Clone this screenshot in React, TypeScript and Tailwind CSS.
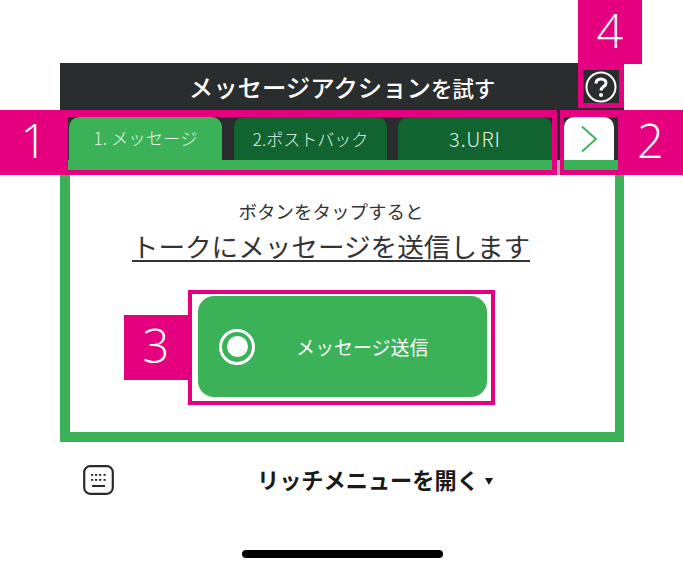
const jp = { fontFamily: '"Noto Sans CJK JP", "Noto Sans", sans-serif' };

function Num({ n, className }: { n: string; className: string }) {
  return (
    <div
      className={`absolute flex items-center justify-center bg-[#e4007f] pb-[4px] text-[47px] font-light leading-none text-white [font-family:'Open_Sans',sans-serif] ${className}`}
    >
      {n}
    </div>
  );
}

function Tab({ label, active, className }: { label: string; active?: boolean; className: string }) {
  return (
    <div
      className={`flex h-[43px] items-center justify-center rounded-t-[10px] font-light text-[#e4f3e8] ${active ? 'bg-[#3bb158]' : 'bg-[#11632f]'} ${className}`}
    >
      {label}
    </div>
  );
}

export default function App() {
  return (
    <div className="relative h-[572px] w-[683px] overflow-hidden bg-white" style={jp}>
      <div className="ml-[60px] w-[564px] pt-[63px]">
        <div className="flex h-[47px] items-center justify-center bg-[#2a2d2d] pt-[2px] font-medium leading-none text-white">
          <span className="text-[24.4px]">メッセージアクション</span>
          <span className="text-[21.4px]">を試す</span>
        </div>
        <div className="flex h-[50px] items-start bg-[#2a2d2d] pl-[9px] pr-[10px] pt-[7px]">
          <Tab label="1. メッセージ" active className="w-[153px] text-[17.4px]" />
          <Tab label="2.ポストバック" className="ml-[12px] w-[153px] text-[17px]" />
          <Tab label="3.URI" className="ml-[11px] w-[154px] text-[20px] tracking-[1px]" />
          <div className="ml-[12px] flex h-[43px] w-[50px] items-center justify-center rounded-t-[10px] bg-white">
            <svg width="20" height="28" viewBox="0 0 20 28" fill="none" stroke="#3bb158" strokeWidth="1.8">
              <path d="M3 1.5 L17 14 L3 26.5" />
            </svg>
          </div>
        </div>
        <div className="flex h-[282px] flex-col border-x-[10px] border-y-[10px] border-[#3bb158] bg-white [border-right-width:9px]">
          <div className="flex flex-col items-center pr-[23px] text-[#333]">
            <p className="mt-[29px] text-[18.5px] font-normal leading-[24px]">ボタンをタップすると</p>
            <p className="mt-[9px] border-b-2 border-[#333] text-[26.6px] font-normal leading-[28px]">トークにメッセージを送信します</p>
          </div>
          <div className="relative ml-[118px] mt-[28px] h-[115px] w-[307px] border-4 border-[#e4007f] bg-white pb-[4px] pl-[6px] pr-[4px] pt-[2px]">
            <Num n="3" className="-left-[68px] top-[21px] h-[65px] w-[64px]" />
            <div className="flex h-[101px] items-center rounded-[16px] bg-[#3bb158] pl-[21px] text-white">
              <div className="flex h-[36px] w-[36px] items-center justify-center rounded-full border-[3px] border-white">
                <div className="h-[21px] w-[21px] rounded-full bg-white" />
              </div>
              <span className="ml-[41px] text-[19px] font-normal leading-none">メッセージ送信</span>
            </div>
          </div>
        </div>
      </div>

      <div className="ml-[83px] mt-[23px] flex h-[29px] items-center">
        <svg width="31" height="30" viewBox="0 0 31 30" fill="none">
          <rect x="1.2" y="1.2" width="28.6" height="27.6" rx="6" stroke="#2a2a2a" strokeWidth="2.2" />
          <g fill="#2a2a2a">
            <rect x="8" y="9" width="2.2" height="1.8" />
            <rect x="12" y="9" width="2.2" height="1.8" />
            <rect x="16" y="9" width="2.2" height="1.8" />
            <rect x="20.5" y="9" width="2.2" height="1.8" />
            <rect x="8" y="14" width="2.2" height="1.8" />
            <rect x="12" y="14" width="2.2" height="1.8" />
            <rect x="16" y="14" width="2.2" height="1.8" />
            <rect x="20.5" y="14" width="2.2" height="1.8" />
            <rect x="9" y="20" width="13" height="2" />
          </g>
        </svg>
        <span className="ml-[143px] text-[22.2px] font-bold leading-none text-[#1a1a1a]">リッチメニューを開く</span>
        <svg className="ml-[6px] mt-[2px]" width="8" height="8" viewBox="0 0 8 8" fill="#1a1a1a">
          <path d="M0 1 H8 L4 8 Z" />
        </svg>
      </div>

      <div className="ml-[242px] mt-[56px] h-[8px] w-[201px] rounded-full bg-black" />

      {/* annotation overlays */}
      <div className="absolute left-[68px] top-[110px] h-[65px] w-[489px] border-[5px] border-l-0 border-t-[7px] border-[#e4007f]" />
      <div className="absolute left-[557px] top-[160px] h-[15px] w-[3px] bg-[#a8a8a8]" />
      <div className="absolute left-[560px] top-[110px] h-[65px] w-[58px] border-[4px] border-b-[5px] border-r-0 border-t-[7px] border-[#e4007f]" />
      <div className="absolute left-[578px] top-[64px] flex h-[44px] w-[46px] items-center justify-center border-[5px] border-t-[6px] border-[#e4007f] bg-[#2a2d2d]">
        <svg width="32" height="32" viewBox="0 0 32 32" fill="none" stroke="white">
          <circle cx="16" cy="16" r="14.5" strokeWidth="2" />
          <path d="M11 12.5 C11 9.5 13.2 8 16 8 C19 8 21 9.8 21 12.2 C21 15.6 16 15.6 16 19.5" strokeWidth="3" />
          <circle cx="16" cy="24" r="2" fill="white" stroke="none" />
        </svg>
      </div>
      <Num n="1" className="left-0 top-[110px] h-[65px] w-[68px]" />
      <Num n="2" className="left-[618px] top-[110px] h-[65px] w-[65px]" />
      <Num n="4" className="left-[578px] top-0 h-[64px] w-[64px]" />
    </div>
  );
}
